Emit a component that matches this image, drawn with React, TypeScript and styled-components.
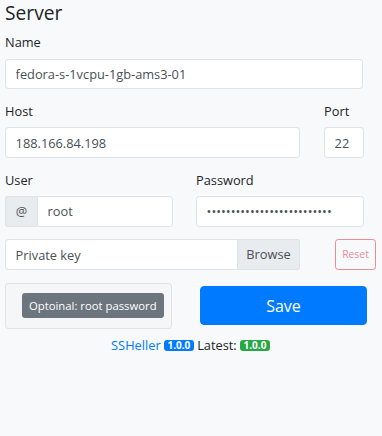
import React from 'react'
import styled, { createGlobalStyle } from 'styled-components'

const GlobalStyle = createGlobalStyle`
  html, body {
    margin: 0;
    padding: 0;
    background: #f8f9fa;
  }
  body {
    font-family: "Open Sans", "Noto Sans", sans-serif;
    font-size: 12.8px;
    line-height: 1.5;
    color: #212529;
  }
  * { box-sizing: border-box; }
`

const Page = styled.div`
  padding: 0 6px 0 5px;
  width: 382px;
`

const Title = styled.h4`
  margin: 0 0 9px;
  padding-top: 1px;
  font-size: 19.2px;
  font-weight: 500;
  line-height: 23px;
`

const Group = styled.div`
  margin-bottom: 12.8px;
`

const Label = styled.label`
  display: block;
  margin-bottom: 6.4px;
  line-height: 19.2px;
`

const Row = styled.div<{ $cols: string; $gap?: number }>`
  display: grid;
  grid-template-columns: ${p => p.$cols};
  column-gap: ${p => p.$gap ?? 24}px;
  align-items: start;
  margin-bottom: 12.8px;
`

const Input = styled.input<{ $w?: number }>`
  display: block;
  width: ${p => (p.$w ? `${p.$w}px` : '100%')};
  height: 30.4px;
  padding: 0 9.6px;
  font: inherit;
  color: #495057;
  background: #fff;
  border: 1px solid #dfe3e7;
  border-radius: 3.2px;
  outline: none;
  min-width: 0;
  &::placeholder {
    color: #495057;
  }
`

const InputGroup = styled.div`
  display: flex;
  width: 100%;
  height: 30.4px;
`

const Addon = styled.span<{ $side: 'left' | 'right'; $w: number }>`
  display: flex;
  align-items: center;
  justify-content: center;
  flex: 0 0 ${p => p.$w}px;
  background: #e9ecef;
  border: 1px solid #dfe3e7;
  color: #495057;
  border-radius: ${p => (p.$side === 'left' ? '3.2px 0 0 3.2px' : '0 3.2px 3.2px 0')};
  ${p => (p.$side === 'left' ? 'border-right: none;' : 'border-left: none;')}
`

const GroupInput = styled(Input)<{ $side: 'left' | 'right' }>`
  flex: 1;
  border-radius: ${p => (p.$side === 'left' ? '0 3.2px 3.2px 0' : '3.2px 0 0 3.2px')};
`

const ResetButton = styled.button`
  width: 41px;
  height: 30.4px;
  padding: 0;
  font: inherit;
  font-size: 10.4px;
  color: #dc3545;
  background: transparent;
  border: 1px solid #dc3545;
  border-radius: 3.2px;
  opacity: 0.55;
  margin-left: 35px;
`

const BottomRow = styled.div`
  display: flex;
  align-items: center;
  margin-top: 12.8px;
  gap: 28px;
`

const Hint = styled.div`
  flex: 0 0 167px;
  height: 46px;
  display: flex;
  align-items: center;
  padding-left: 16px;
  background: #f5f6f7;
  border: 1px solid #dfe2e5;
  border-radius: 3.2px;
`

const Badge = styled.span<{ $bg: string; $small?: boolean }>`
  display: inline-block;
  white-space: nowrap;
  background: ${p => p.$bg};
  color: #fff;
  border-radius: 3.2px;
  font-size: ${p => (p.$small ? '10px' : '11.3px')};
  font-weight: ${p => (p.$small ? 700 : 400)};
  line-height: ${p => (p.$small ? '11px' : '25px')};
  padding: ${p => (p.$small ? '0 3.5px' : '0 7px')};
  vertical-align: ${p => (p.$small ? '1px' : 'middle')};
`

const SaveButton = styled.button`
  flex: 0 0 167px;
  height: 38.4px;
  font: inherit;
  font-size: 16px;
  color: #fff;
  background: #007bff;
  border: 1px solid #007bff;
  border-radius: 4px;
`

const Footer = styled.div`
  margin-top: 7px;
  text-align: center;
  color: #212529;
`

const Link = styled.a`
  color: #007bff;
  text-decoration: none;
`

export default function App() {
  return (
    <Page>
      <GlobalStyle />
      <Title>Server</Title>
      <Group>
        <Label>Name</Label>
        <Input $w={358} defaultValue="fedora-s-1vcpu-1gb-ams3-01" />
      </Group>
      <Row $cols="295px 40px">
        <div>
          <Label>Host</Label>
          <Input defaultValue="188.166.84.198" />
        </div>
        <div>
          <Label>Port</Label>
          <Input defaultValue="22" />
        </div>
      </Row>
      <Row $cols="168px 168px" $gap={23}>
        <div>
          <Label>User</Label>
          <InputGroup>
            <Addon $side="left" $w={32}>@</Addon>
            <GroupInput $side="left" defaultValue="root" />
          </InputGroup>
        </div>
        <div>
          <Label>Password</Label>
          <Input type="password" defaultValue="abcdefghijklmnopqrstuvwxyz" />
        </div>
      </Row>
      <Row $cols="295px auto" $gap={0}>
        <InputGroup>
          <GroupInput $side="right" placeholder="Private key" />
          <Addon $side="right" $w={62}>Browse</Addon>
        </InputGroup>
        <ResetButton>Reset</ResetButton>
      </Row>
      <BottomRow>
        <Hint>
          <Badge $bg="#6c757d">Optoinal: root password</Badge>
        </Hint>
        <SaveButton>Save</SaveButton>
      </BottomRow>
      <Footer>
        <Link href="#">SSHeller</Link> <Badge $bg="#007bff" $small>1.0.0</Badge> Latest:{' '}
        <Badge $bg="#28a745" $small>1.0.0</Badge>
      </Footer>
    </Page>
  )
}
